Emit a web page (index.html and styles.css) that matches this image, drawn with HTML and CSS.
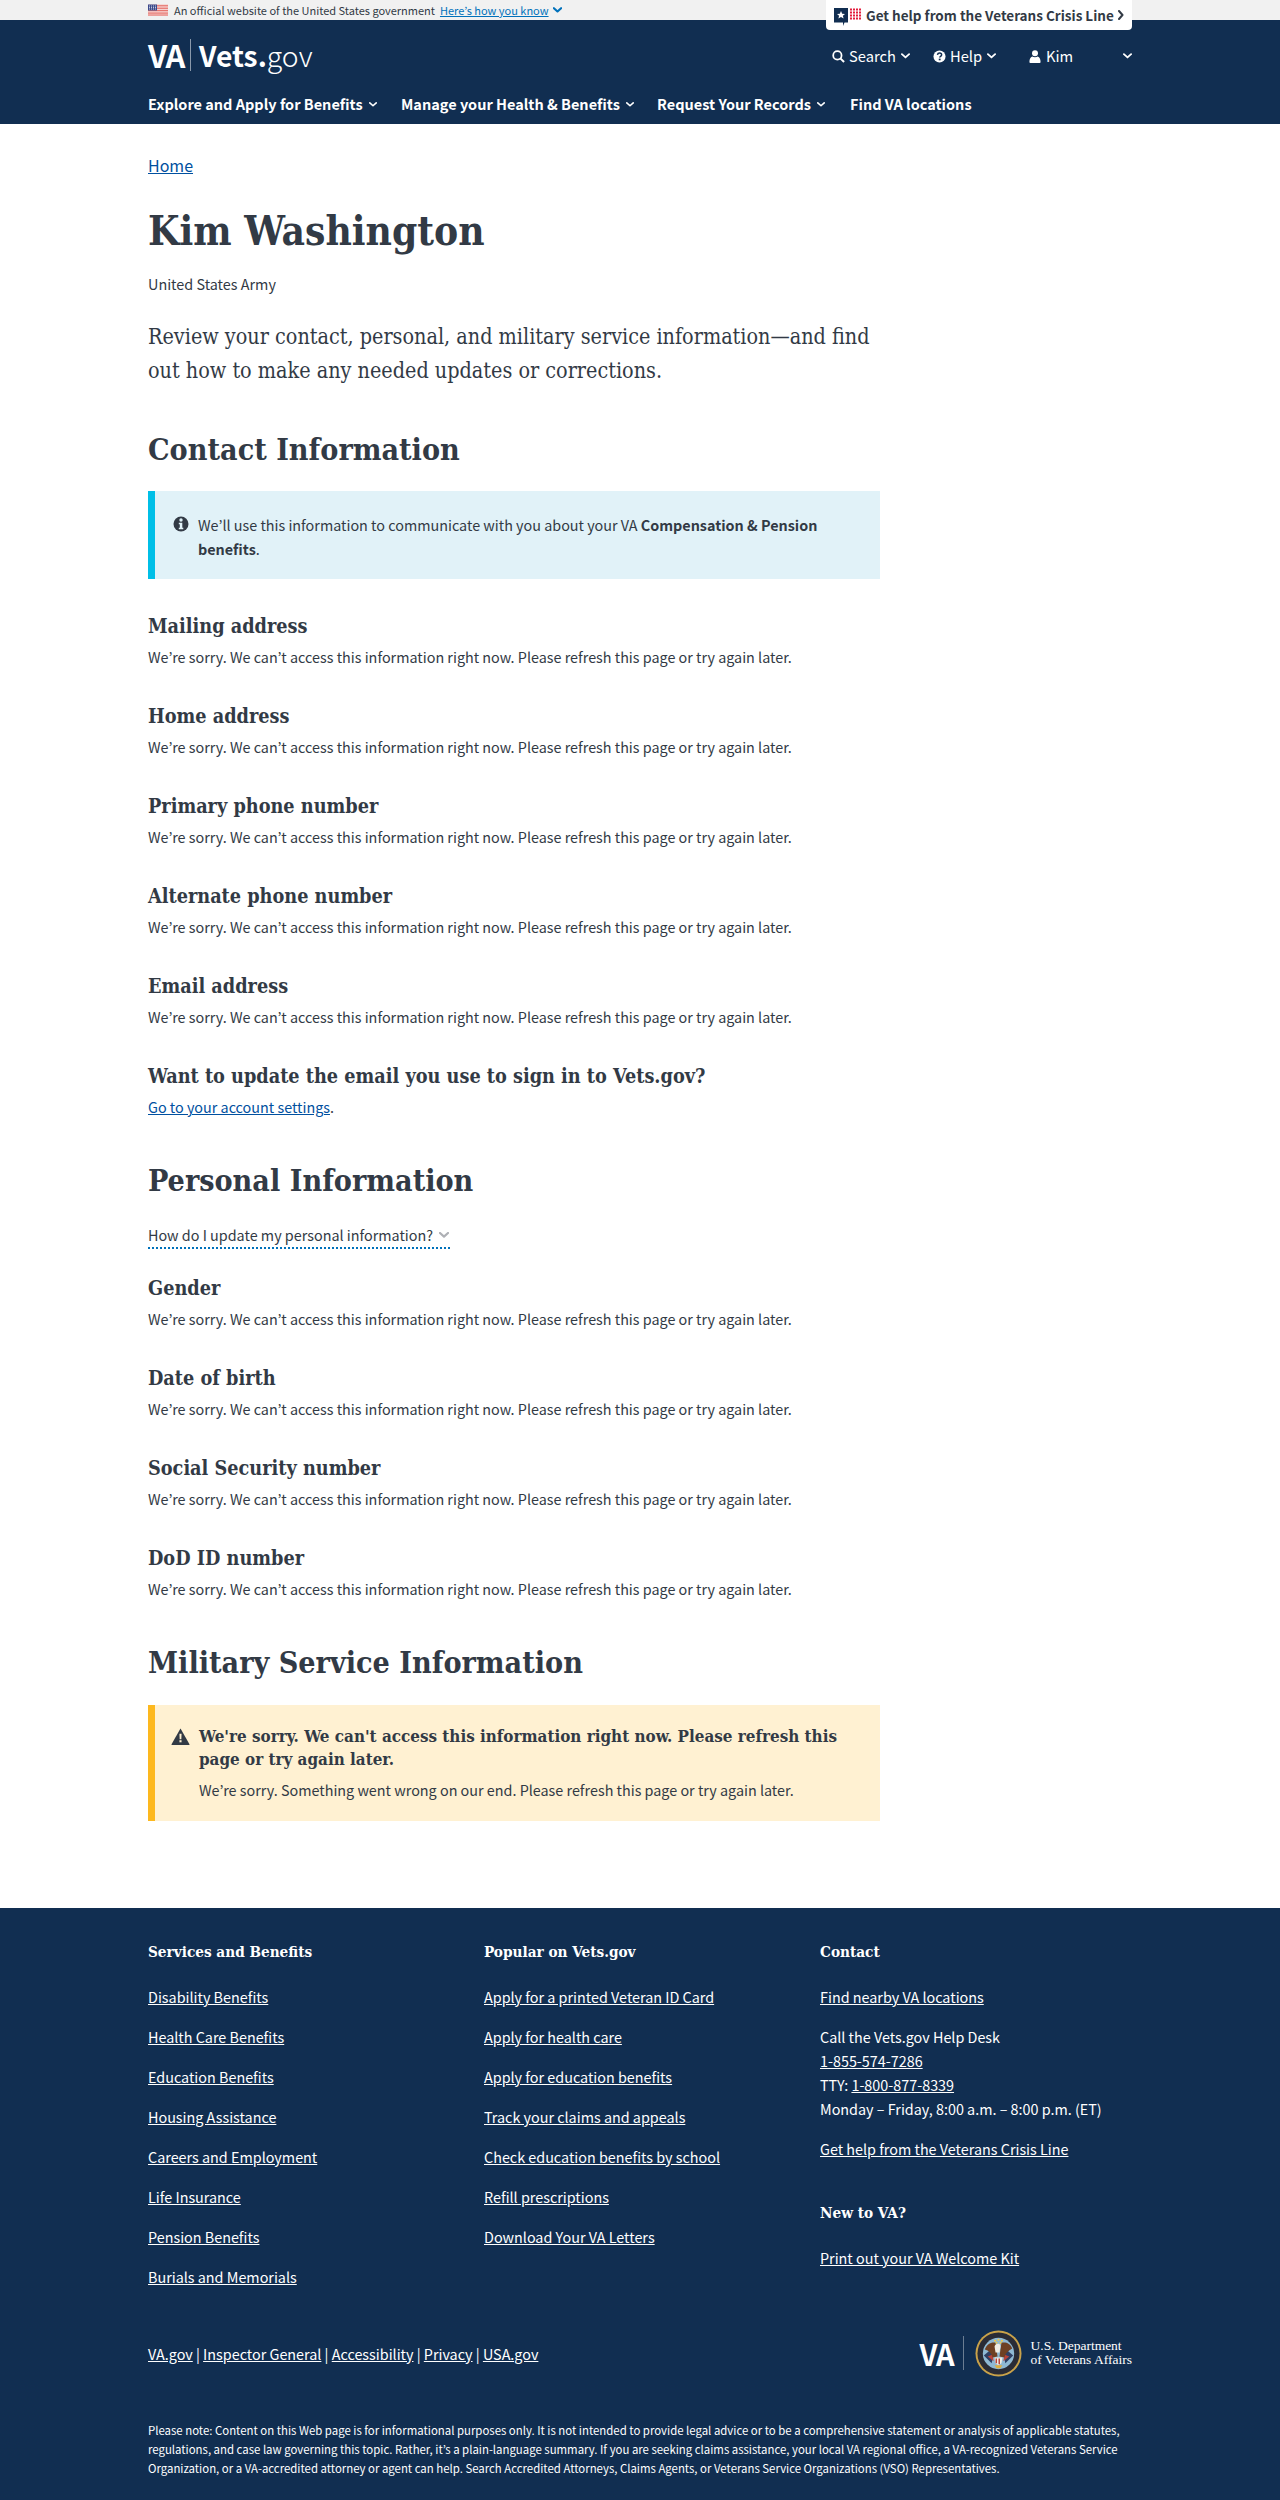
FILE: index.html
```html
<!DOCTYPE html>
<html lang="en">
<head>
<meta charset="utf-8">
<title>Profile - Vets.gov</title>
<link rel="stylesheet" href="styles.css">
</head>
<body>
<header class="site-header">
  <div class="gov-banner">
    <div class="wrap gov-row">
      <svg class="flag" viewBox="0 0 20 11"><rect width="20" height="11" fill="#fff"/><path d="M0 .8h20M0 2.5h20M0 4.2h20M0 5.9h20M0 7.6h20M0 9.3h20M0 10.6h20" stroke="#e0544c" stroke-width=".9"/><rect width="9" height="6" fill="#3b4a8c"/><path d="M1 1.5h7M1 3h7M1 4.5h7" stroke="#fff" stroke-width=".7" stroke-dasharray="1 1"/></svg>
      <span>An official website of the United States government</span>
      <a class="know" href="#">Here’s how you know</a>
      <svg class="chev know-chev" viewBox="0 0 10 6"><path d="M1 1l4 3.6L9 1" /></svg>
    </div>
  </div>
  <div class="wrap head-main">
    <a class="crisis" href="#">
      <svg class="crisis-icon" viewBox="0 0 28 19"><path d="M0 0h14v14.500H10.500L9 18V14.500H0z" fill="#112e51"/><path d="M7 3l1.200 2.700 2.800.2-2.100 1.900.7 2.800L7 9.100l-2.600 1.500.7-2.800L3 5.900l2.800-.2z" fill="#fff"/><path d="M16 1.500h12M16 4.500h12M16 7.500h12M16 10.500h12" stroke="#e31c3d" stroke-width="2" stroke-dasharray="2 1"/></svg>
      <span>Get help from the Veterans Crisis Line</span>
      <svg class="chev crisis-chev" viewBox="0 0 6 10"><path d="M1 1l3.500 4L1 9"/></svg>
    </a>
    <div class="top-row">
      <a class="logo" href="#"><span class="logo-va">VA</span><span class="logo-div"></span><span class="logo-vets">Vets.</span><span class="logo-gov">gov</span></a>
      <div class="utils">
        <a class="util util-search" href="#"><svg class="u-icon" viewBox="0 0 14 14"><circle cx="5.800" cy="5.800" r="4.500" fill="none" stroke="#fff" stroke-width="1.900"/><path d="M9 9l4 4" stroke="#fff" stroke-width="2.200"/></svg>Search<svg class="chev u-chev" viewBox="0 0 10 6"><path d="M1 1l4 3.600L9 1"/></svg></a>
        <a class="util util-help" href="#"><svg class="u-icon" viewBox="0 0 14 14"><circle cx="7" cy="7" r="6.500" fill="#fff"/><path d="M4.800 5.200C5 3.800 6 3.300 7.100 3.300c1.300 0 2.200.8 2.200 1.900 0 1.700-2.100 1.600-2.100 3" fill="none" stroke="#112e51" stroke-width="1.600"/><rect x="6.200" y="9.300" width="2" height="1.800" fill="#112e51"/></svg>Help<svg class="chev u-chev" viewBox="0 0 10 6"><path d="M1 1l4 3.600L9 1"/></svg></a>
        <a class="util util-user" href="#"><svg class="u-icon user-icon" viewBox="0 0 12 14"><circle cx="6" cy="3.500" r="3.200" fill="#fff"/><path d="M1 14a1 1 0 0 1-1-1c0-3 1-5.500 3-6 1.800 1.200 4.200 1.200 6 0 2 .5 3 3 3 6a1 1 0 0 1-1 1z" fill="#fff"/></svg><span class="user-name">Kim</span><svg class="chev u-chev" viewBox="0 0 10 6"><path d="M1 1l4 3.600L9 1"/></svg></a>
      </div>
    </div>
    <nav class="main-nav">
      <a href="#">Explore and Apply for Benefits<svg class="chev nav-chev" viewBox="0 0 10 6"><path d="M1 1l4 3.600L9 1"/></svg></a>
      <a href="#">Manage your Health &amp; Benefits<svg class="chev nav-chev" viewBox="0 0 10 6"><path d="M1 1l4 3.600L9 1"/></svg></a>
      <a href="#">Request Your Records<svg class="chev nav-chev" viewBox="0 0 10 6"><path d="M1 1l4 3.600L9 1"/></svg></a>
      <a href="#">Find VA locations</a>
    </nav>
  </div>
</header>

<main class="wrap main">
  <p class="crumb"><a href="#">Home</a></p>
  <h1>Kim Washington</h1>
  <p class="branch">United States Army</p>
  <p class="lead">Review your contact, personal, and military service information—and find out how to make any needed updates or corrections.</p>

  <h2>Contact Information</h2>
  <div class="alert alert-info">
    <svg class="alert-icon" viewBox="0 0 16 16"><circle cx="8" cy="8" r="7.500" fill="#323a45"/><circle cx="8" cy="4" r="1.700" fill="#e1f2f8"/><path d="M5.800 6.800h3.500v5h1v1.500H5.800v-1.500h1v-3.500h-1z" fill="#e1f2f8"/></svg>
    <p>We’ll use this information to communicate with you about your VA <strong>Compensation &amp; Pension</strong> <strong>benefits</strong>.</p>
  </div>
  <section class="item first"><h3>Mailing address</h3><p>We’re sorry. We can’t access this information right now. Please refresh this page or try again later.</p></section>
  <section class="item"><h3>Home address</h3><p>We’re sorry. We can’t access this information right now. Please refresh this page or try again later.</p></section>
  <section class="item"><h3>Primary phone number</h3><p>We’re sorry. We can’t access this information right now. Please refresh this page or try again later.</p></section>
  <section class="item"><h3>Alternate phone number</h3><p>We’re sorry. We can’t access this information right now. Please refresh this page or try again later.</p></section>
  <section class="item"><h3>Email address</h3><p>We’re sorry. We can’t access this information right now. Please refresh this page or try again later.</p></section>
  <section class="item"><h3>Want to update the email you use to sign in to Vets.gov?</h3><p><a href="#">Go to your account settings</a>.</p></section>

  <h2 class="h2-personal">Personal Information</h2>
  <div class="update-row"><a class="update" href="#">How do I update my personal information?<svg class="chev update-chev" viewBox="0 0 10 6"><path d="M1 1l4 3.600L9 1"/></svg></a></div>
  <section class="item gender"><h3>Gender</h3><p>We’re sorry. We can’t access this information right now. Please refresh this page or try again later.</p></section>
  <section class="item"><h3>Date of birth</h3><p>We’re sorry. We can’t access this information right now. Please refresh this page or try again later.</p></section>
  <section class="item"><h3>Social Security number</h3><p>We’re sorry. We can’t access this information right now. Please refresh this page or try again later.</p></section>
  <section class="item"><h3>DoD ID number</h3><p>We’re sorry. We can’t access this information right now. Please refresh this page or try again later.</p></section>

  <h2 class="h2-military">Military Service Information</h2>
  <div class="alert alert-warn">
    <svg class="alert-icon" viewBox="0 0 18 16"><path d="M9 .5l8.500 14.800a.5.5 0 0 1-.4.700H.9a.5.5 0 0 1-.4-.7z" fill="#323a45"/><path d="M8 5.500h2l-.2 5H8.200z" fill="#fff1d2"/><rect x="8" y="11.500" width="2" height="2" fill="#fff1d2"/></svg>
    <div>
      <h4>We're sorry. We can't access this information right now. Please refresh this page or try again later.</h4>
      <p>We’re sorry. Something went wrong on our end. Please refresh this page or try again later.</p>
    </div>
  </div>
</main>

<footer class="footer">
  <div class="wrap">
    <div class="foot-cols">
      <div>
        <h5>Services and Benefits</h5>
        <ul>
          <li><a href="#">Disability Benefits</a></li>
          <li><a href="#">Health Care Benefits</a></li>
          <li><a href="#">Education Benefits</a></li>
          <li><a href="#">Housing Assistance</a></li>
          <li><a href="#">Careers and Employment</a></li>
          <li><a href="#">Life Insurance</a></li>
          <li><a href="#">Pension Benefits</a></li>
          <li><a href="#">Burials and Memorials</a></li>
        </ul>
      </div>
      <div>
        <h5>Popular on Vets.gov</h5>
        <ul>
          <li><a href="#">Apply for a printed Veteran ID Card</a></li>
          <li><a href="#">Apply for health care</a></li>
          <li><a href="#">Apply for education benefits</a></li>
          <li><a href="#">Track your claims and appeals</a></li>
          <li><a href="#">Check education benefits by school</a></li>
          <li><a href="#">Refill prescriptions</a></li>
          <li><a href="#">Download Your VA Letters</a></li>
        </ul>
      </div>
      <div>
        <h5>Contact</h5>
        <ul class="contact-list">
          <li><a href="#">Find nearby VA locations</a></li>
          <li class="desk">Call the Vets.gov Help Desk<br><a href="#">1-855-574-7286</a><br>TTY: <a href="#">1-800-877-8339</a><br>Monday – Friday, 8:00 a.m. – 8:00 p.m. (ET)</li>
          <li><a href="#">Get help from the Veterans Crisis Line</a></li>
        </ul>
        <h5 class="new-va">New to VA?</h5>
        <ul><li><a href="#">Print out your VA Welcome Kit</a></li></ul>
      </div>
    </div>
    <div class="foot-legal">
      <p class="legal-links"><a href="#">VA.gov</a> | <a href="#">Inspector General</a> | <a href="#">Accessibility</a> | <a href="#">Privacy</a> | <a href="#">USA.gov</a></p>
      <div class="dept">
        <span class="dept-va">VA</span>
        <span class="dept-div"></span>
        <svg class="seal" viewBox="0 0 48 48">
          <circle cx="24" cy="24" r="23.500" fill="#c9a24a"/>
          <circle cx="24" cy="24" r="21.500" fill="#2a2c36"/>
          <circle cx="24" cy="24" r="16" fill="#8fb9d4"/>
          <path d="M9 26l6-5 4 4-2 9zM39 26l-6-5-4 4 2 9z" fill="#2f3f63"/>
          <path d="M13 27l5-2 1 7zM35 27l-5-2-1 7z" fill="#b8423a"/>
          <path d="M10 20c2-6 7-8 11-7l2 14-5 1c-1-4-4-7-8-8zM38 19c-2-6-7-7-11-6l-2 14 5 1c1-4 4-7 8-9z" fill="#6e4023"/>
          <path d="M20 17c0-2 2-3 4-3 1 0 2 1 2 3l-1 6h-4z" fill="#f0ede4"/>
          <path d="M20 28h8l-1 6-3 2-3-2z" fill="#f0ede4"/>
          <path d="M21 29h1.500v5H21zM24 29h1.500v6H24z" fill="#b8423a"/>
          <path d="M20 36h8l-2 3h-4z" fill="#e0b040"/>
          <circle cx="20.500" cy="11" r="1.100" fill="#f0c94a"/><circle cx="27.500" cy="11" r="1.100" fill="#f0c94a"/><circle cx="24" cy="10" r="1.100" fill="#f0c94a"/><circle cx="22" cy="13" r="1" fill="#f0c94a"/><circle cx="26" cy="13" r="1" fill="#f0c94a"/>
        </svg>
        <span class="dept-name">U.S. Department<br>of Veterans Affairs</span>
      </div>
    </div>
    <p class="note">Please note: Content on this Web page is for informational purposes only. It is not intended to provide legal advice or to be a comprehensive statement or analysis of applicable statutes, regulations, and case law governing this topic. Rather, it’s a plain-language summary. If you are seeking claims assistance, your local VA regional office, a VA-recognized Veterans Service Organization, or a VA-accredited attorney or agent can help. Search Accredited Attorneys, Claims Agents, or Veterans Service Organizations (VSO) Representatives.</p>
  </div>
</footer>
</body>
</html>
```

FILE: styles.css
```css
* { box-sizing: border-box; }
html, body { margin: 0; padding: 0; }
body {
  font-family: "Noto Sans CJK KR", "Lato", sans-serif;
  font-size: 14.360px;
  color: #323a45;
  background: #fff;
  height: 2500px;
  overflow: hidden;
}
a { color: #0071bb; }
p, h1, h2, h3, h4, h5, ul { margin: 0; padding: 0; }
ul { list-style: none; }
h1, h2, h3, h4, h5 { font-family: "DejaVu Serif Condensed", "DejaVu Serif", serif; font-weight: 700; }
.wrap { width: 984px; margin: 0 auto; }
.chev { fill: none; stroke: #fff; stroke-width: 2; stroke-linecap: round; stroke-linejoin: round; }

.site-header { background: #112e51; height: 124px; }
.gov-banner { background: #f1f1f1; height: 20px; color: #323a45; font-size: 11px; line-height: 20px; }
.gov-row { display: flex; align-items: center; height: 20px; }
.flag { width: 20px; height: 12px; margin-right: 6px; }
.know { margin-left: 5px; color: #0071bb; }
.know-chev { width: 9px; height: 6px; margin-left: 4px; stroke: #0071bb; stroke-width: 2.400; }

.head-main { position: relative; }
.crisis {
  position: absolute; right: 0; top: -20px; width: 306px; height: 30px;
  background: #fff; border-radius: 0 0 4px 4px; color: #323a45; font-weight: 700; font-size: 13.500px; line-height: 30px;
  display: flex; align-items: center; padding-left: 8px; text-decoration: none; white-space: nowrap;
}
.crisis-icon { width: 28px; height: 19px; margin: 4px 4px 0 0; }
.crisis-chev { width: 6px; height: 10px; margin-left: 4px; stroke: #323a45; stroke-width: 2; }

.top-row { display: flex; justify-content: space-between; height: 60px; padding-top: 19px; }
.logo { display: flex; align-items: center; height: 32px; color: #fff; text-decoration: none; font-size: 28.300px; white-space: nowrap; line-height: 32px; }
.logo-va { font-weight: 700; font-size: 31px; letter-spacing: -1px; width: 36px; }
.logo-div { width: 1px; height: 32px; background: #8a99ab; margin: 0 8px 0 6px; }
.logo-vets { font-weight: 700; }
.logo-gov { font-weight: 300; }
.utils { display: flex; height: 34px; align-items: center; width: 300px; font-size: 14.700px; line-height: 34px; }
.util { display: flex; align-items: center; color: #fff; text-decoration: none; }
.util-search { width: 101px; }
.util-help { width: 96px; }
.util-user { flex: 1; }
.u-icon { width: 13px; height: 13px; margin-right: 4px; }
.user-icon { width: 12px; height: 13px; margin-right: 5px; }
.u-chev { width: 9px; height: 6px; margin-left: 5px; }
.user-name { flex: 1; }

.main-nav { display: flex; font-weight: 700; font-size: 14.500px; line-height: 20px; padding-top: 14px; }
.main-nav a { color: #fff; text-decoration: none; display: flex; align-items: center; }
.main-nav a:nth-child(1) { width: 253px; }
.main-nav a:nth-child(2) { width: 256px; }
.main-nav a:nth-child(3) { width: 193px; }
.nav-chev { width: 8px; height: 5px; margin-left: 6px; }

.main { padding-top: 30px; }
.crumb { font-size: 16px; line-height: 22px; }
.crumb a { color: #0050a0; }
h1 { font-size: 40.300px; line-height: 48px; margin-top: 31px; }
.branch { font-size: 14.400px; line-height: 22px; margin-top: 18px; }
.lead { font-family: "DejaVu Serif Condensed", serif; font-size: 21.400px; line-height: 34px; width: 732px; margin-top: 25px; }
h2 { font-size: 30.200px; line-height: 38px; margin-top: 43px; }

.alert { width: 732px; display: flex; border-left: 7px solid; }
.alert-info { background: #e1f2f8; border-color: #00bfe7; margin-top: 22px; height: 88px; padding: 22px 40px 0 18px; line-height: 24px; }
.alert-icon { width: 16px; height: 16px; flex: none; margin: 3px 9px 0 0; }
.alert-warn { background: #fff1d2; border-color: #fdb81e; margin-top: 23px; height: 116px; padding: 20px 30px 0 16px; }
.alert-warn .alert-icon { width: 19px; height: 17px; margin: 3px 9px 0 0; }
.alert-warn h4 { font-size: 16.900px; line-height: 23px; }
.alert-warn p { line-height: 24px; margin-top: 7px; }

.item { margin-top: 34px; }
.item.first { margin-top: 34px; }
.item h3 { font-size: 19.700px; line-height: 28px; }
.item p { line-height: 24px; margin-top: 4px; }
.item p a { color: #0050a0; }
.h2-personal { margin-top: 43px; }
.update-row { display: flex; margin-top: 22px; }
.update { display: flex; align-items: center; width: 302px; height: 27px; line-height: 27px; color: #323a45; text-decoration: none; border-bottom: 2px dotted #0071bb; white-space: nowrap; }
.update-chev { width: 10px; height: 6px; margin-left: 6px; stroke: #aeb0b5; stroke-width: 2.200; }
.item.gender { margin-top: 26px; }
.h2-military { margin-top: 43px; }

.footer { background: #112e51; color: #fff; margin-top: 87px; height: 594px; padding-top: 31px; }
.footer a { color: #fff; }
.foot-cols { display: grid; grid-template-columns: 336px 336px 312px; height: 384px; }
h5 { font-size: 15.200px; line-height: 26px; }
.footer ul { margin-top: 20px; }
.footer li { line-height: 24px; margin-bottom: 16px; }
h5.new-va { margin-top: 39px; }
.foot-legal { display: flex; justify-content: space-between; align-items: center; height: 60px; }
.dept { display: flex; align-items: center; }
.dept-va { font-weight: 700; font-size: 29px; letter-spacing: -1px; line-height: 34px; }
.dept-div { width: 1px; height: 34px; background: #6b7d92; margin: 0 11px 0 9px; }
.seal { width: 47px; height: 47px; margin-right: 9px; }
.dept-name { font-family: "Liberation Serif", serif; font-size: 13.500px; line-height: 14px; }
.note { font-size: 11.400px; line-height: 19px; margin-top: 38px; }
```
